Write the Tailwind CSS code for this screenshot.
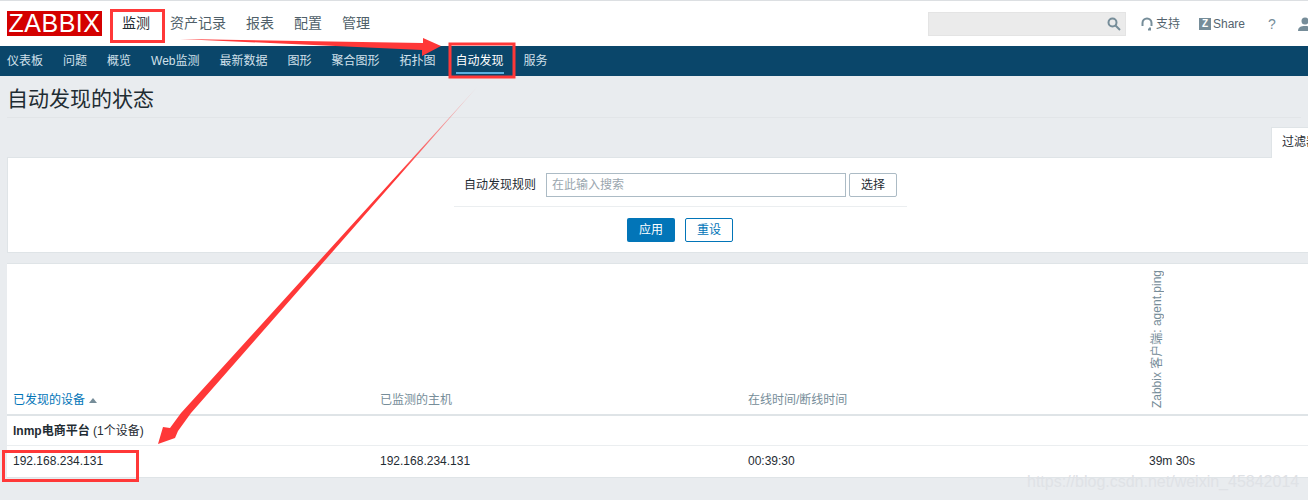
<!DOCTYPE html>
<html lang="zh">
<head>
<meta charset="utf-8">
<script src="https://cdn.jsdelivr.net/npm/@tailwindcss/browser@4"></script>
</head>
<body class="relative h-[500px] w-[1308px] overflow-hidden bg-[#e9ecef] font-['Liberation_Sans','Noto_Sans_CJK_SC',sans-serif] text-xs text-[#1f2c33]">
  <div class="h-px bg-[#dcdfe2]"></div>
  <header class="flex h-[45px] items-center whitespace-nowrap bg-white pl-[7px]">
    <div class="flex h-[25px] w-[95px] shrink-0 items-center justify-center bg-[#d40000] text-[25px] leading-none tracking-[0.5px] text-white">ZABBIX</div>
    <nav class="ml-5 flex shrink-0 -translate-y-px gap-5 text-sm text-[#4f5f69]">
      <span class="text-[#1f2c33]">监测</span><span>资产记录</span><span>报表</span><span>配置</span><span>管理</span>
    </nav>
    <div class="ml-[558px] flex h-6 w-[198px] shrink-0 items-center justify-end border border-[#e4e4e4] bg-[#ebebeb] pr-1">
      <svg class="h-3.5 w-3.5" viewBox="0 0 14 14" fill="none" stroke="#768d99" stroke-width="2"><circle cx="5.500" cy="5.500" r="4"/><path d="M8.500 8.500l4.500 4.500"/></svg>
    </div>
    <div class="ml-[15px] flex shrink-0 items-center gap-[3px] text-[#53636e]">
      <svg class="h-3.5 w-3" viewBox="0 0 12 14" fill="none" stroke="#768d99" stroke-width="2"><path d="M1.500 9V6a4.500 4.500 0 0 1 9 0v3"/><path d="M9 10.500v2H7"/></svg>
      <span>支持</span>
    </div>
    <div class="ml-[19px] flex shrink-0 items-center gap-0.5 text-[#53636e]">
      <span class="flex h-3 w-3 items-center justify-center bg-[#768d99] text-[10px] font-bold leading-none text-white">Z</span>
      <span>Share</span>
    </div>
    <span class="ml-[23px] shrink-0 text-sm text-[#768d99]">?</span>
    <svg class="ml-[22px] h-3.5 w-3.5 shrink-0" viewBox="0 0 14 14" fill="#768d99"><circle cx="7" cy="4" r="3.500"/><path d="M0 14c0-4 3-5 7-5s7 1 7 5z"/></svg>
  </header>
  <nav class="flex h-[30px] items-center gap-5 bg-[#0a466a] pl-[7px] text-[#d1e0ea]">
    <span>仪表板</span><span>问题</span><span>概览</span><span>Web监测</span><span>最新数据</span><span>图形</span><span>聚合图形</span><span>拓扑图</span>
    <span class="relative text-white">自动发现<span class="absolute -bottom-[5px] left-0 right-0 h-0.5 bg-[#5ab0e0]"></span></span>
    <span>服务</span>
  </nav>
  <div class="mx-[7px] flex h-[42px] items-center border-b border-[#e2e5e8] pt-[3px]">
    <h1 class="text-[21px] font-normal leading-none text-[#1f2c33]">自动发现的状态</h1>
  </div>
  <div class="mt-[9px] flex justify-end">
    <div class="h-[31px] w-[37px] overflow-hidden whitespace-nowrap border-l border-t border-[#dfe4e7] bg-white pl-2.5 pt-[6px] text-[#1f2c33]">过滤器</div>
  </div>
  <section class="-mt-px ml-[7px] h-[96px] border border-r-0 border-[#dfe4e7] bg-white">
    <div class="ml-[446px] w-[453px] border-b border-[#ebeef0] pb-[9px] pt-[15px]">
      <div class="flex items-center">
        <span class="ml-2.5 w-[82px] text-[#1f2c33]">自动发现规则</span>
        <div class="flex h-6 w-[300px] items-center border border-[#acbbc5] pl-[5px] text-[#9aa6ae]">在此输入搜索</div>
        <button class="ml-[3px] h-6 w-12 rounded-[2px] border border-[#acbbc5] bg-white text-[#1f2c33]">选择</button>
      </div>
    </div>
    <div class="ml-[619px] mt-[11px] flex gap-2.5">
      <button class="h-6 w-12 rounded-[2px] bg-[#0275b8] text-white">应用</button>
      <button class="h-6 w-12 rounded-[2px] border border-[#0275b8] bg-white text-[#0275b8]">重设</button>
    </div>
  </section>
  <section class="ml-[7px] mt-2.5 h-[215px] border-t border-b border-[#dfe4e7] bg-white">
    <div class="grid h-[152px] grid-cols-[367px_368px_401px_1fr] items-end border-b-2 border-[#dfe4e7] pl-1.5 text-[#768d99]">
      <div class="flex items-center gap-1 pb-1.5 text-[#0275b8]">已发现的设备
        <svg class="h-[5px] w-2" viewBox="0 0 8 5" fill="#768d99"><path d="M4 0l4 5H0z"/></svg>
      </div>
      <div class="pb-1.5">已监测的主机</div>
      <div class="pb-1.5">在线时间/断线时间</div>
      <div class="pb-0.5"><span class="inline-block rotate-180 whitespace-nowrap [text-orientation:sideways] [writing-mode:vertical-rl]">Zabbix 客户端: agent.ping</span></div>
    </div>
    <div class="flex h-[30px] items-center border-b border-[#ebeef0] pl-1.5"><b>lnmp电商平台</b>&nbsp;(1个设备)</div>
    <div class="grid h-[30px] grid-cols-[367px_368px_401px_1fr] items-center pl-1.5">
      <div>192.168.234.131</div><div>192.168.234.131</div><div>00:39:30</div><div>39m 30s</div>
    </div>
  </section>
  <div class="pointer-events-none absolute left-[1027px] top-[473px] whitespace-nowrap text-base leading-[18px] text-[#dfe2e6]">https://blog.csdn.net/weixin_45842014</div>
  <svg class="pointer-events-none absolute left-0 top-0" width="1308" height="500" viewBox="0 0 1308 500" fill="none">
    <defs>
      <linearGradient id="fade" gradientUnits="userSpaceOnUse" x1="478" y1="86" x2="400" y2="175">
        <stop offset="0" stop-color="#ff3838" stop-opacity="0.1"/>
        <stop offset="1" stop-color="#ff3838"/>
      </linearGradient>
    </defs>
    <rect x="111.500" y="10.500" width="52" height="31" stroke="#ff3838" stroke-width="3"/>
    <rect x="450" y="44" width="64" height="33" stroke="#ff3838" stroke-width="3"/>
    <rect x="3.500" y="451.500" width="134" height="29" stroke="#ff3838" stroke-width="3"/>
    <path d="M180 39L423 43V38L441 46L422 56V50Z" fill="#ff3838"/>
    <path d="M478 86L191 413L178 431L175 438L158 444L163 427L170 428L181 413Z" fill="url(#fade)"/>
  </svg>
</body>
</html>
